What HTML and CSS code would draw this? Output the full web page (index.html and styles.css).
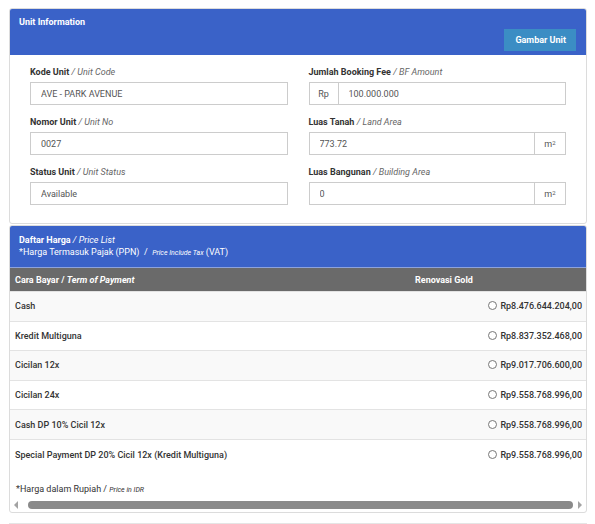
FILE: index.html
```html
<!DOCTYPE html>
<html lang="id">
<head>
    <meta charset="UTF-8">
    <title>Unit Information</title>
    <link rel="stylesheet" href="styles.css">
</head>

<body>
<div class="page">
    <div class="panel">
        <div class="panel-head head-unit">
            <h3 class="title">Unit Information</h3>
            <button class="btn-info">Gambar Unit</button>
        </div>
        <div class="panel-body">
            <div class="grid">
                <div class="field">
                    <label class="lbl">Kode Unit <em>/ Unit Code</em></label>
                    <input class="ctl" value="AVE - PARK AVENUE" readonly>
                </div>
                <div class="field">
                    <label class="lbl">Jumlah Booking Fee <em>/ BF Amount</em></label>
                    <div class="group">
                        <span class="addon addon-left">Rp</span>
                        <input class="ctl" value="100.000.000" readonly>
                    </div>
                </div>
                <div class="field">
                    <label class="lbl">Nomor Unit <em>/ Unit No</em></label>
                    <input class="ctl" value="0027" readonly>
                </div>
                <div class="field">
                    <label class="lbl">Luas Tanah <em>/ Land Area</em></label>
                    <div class="group">
                        <input class="ctl" value="773.72" readonly>
                        <span class="addon addon-right">m<sup>2</sup></span>
                    </div>
                </div>
                <div class="field">
                    <label class="lbl">Status Unit <em>/ Unit Status</em></label>
                    <input class="ctl" value="Available" readonly>
                </div>
                <div class="field">
                    <label class="lbl">Luas Bangunan <em>/ Building Area</em></label>
                    <div class="group">
                        <input class="ctl" value="0" readonly>
                        <span class="addon addon-right">m<sup>2</sup></span>
                    </div>
                </div>
            </div>
        </div>
    </div>

    <div class="panel">
        <div class="panel-head head-price">
            <p class="line"><b>Daftar Harga</b> <em>/ Price List</em></p>
            <p class="line">*Harga Termasuk Pajak (PPN) &nbsp;/ &nbsp;<em class="small">Price Include Tax</em> (VAT)</p>
        </div>
        <div class="scroller">
            <table class="prices">
                <thead>
                <tr>
                    <th class="col-pay">Cara Bayar / <em>Term of Payment</em></th>
                    <th>Renovasi Gold</th>
                </tr>
                </thead>
                <tbody>
                <tr>
                    <td>Cash</td>
                    <td class="price"><input type="radio" name="harga" class="rad">Rp8.476.644.204,00</td>
                </tr>
                <tr>
                    <td>Kredit Multiguna</td>
                    <td class="price"><input type="radio" name="harga" class="rad">Rp8.837.352.468,00</td>
                </tr>
                <tr>
                    <td>Cicilan 12x</td>
                    <td class="price"><input type="radio" name="harga" class="rad">Rp9.017.706.600,00</td>
                </tr>
                <tr>
                    <td>Cicilan 24x</td>
                    <td class="price"><input type="radio" name="harga" class="rad">Rp9.558.768.996,00</td>
                </tr>
                <tr>
                    <td>Cash DP 10% Cicil 12x</td>
                    <td class="price"><input type="radio" name="harga" class="rad">Rp9.558.768.996,00</td>
                </tr>
                <tr>
                    <td>Special Payment DP 20% Cicil 12x (Kredit Multiguna)</td>
                    <td class="price"><input type="radio" name="harga" class="rad">Rp9.558.768.996,00</td>
                </tr>
                </tbody>
            </table>
            <p class="note">*Harga dalam Rupiah / <em class="small">Price in IDR</em></p>
        </div>
        <!-- scrollbar horizontal tabel -->
        <div class="hscroll">
            <span class="arrow arrow-left"></span>
            <span class="thumb"></span>
            <span class="arrow arrow-right"></span>
        </div>
    </div>

    <div class="next"></div>
</div>
</body>
</html>
```

FILE: styles.css
```css
* {
    margin: 0;
    padding: 0;
    box-sizing: border-box;
}

body {
    font-family: Roboto, "Liberation Sans", sans-serif;
    font-size: 9px;
    color: #333;
    background-color: #fff;
}

.page {
    padding: 8px 8px 0 9px;
}

.panel {
    border: 1px solid #dcdcdc;
    border-radius: 3px;
    background-color: #fff;
}

.panel + .panel {
    margin-top: 1px;
}

.panel-head {
    background-color: #3a62c8;
    color: #fff;
    border-radius: 2px 2px 0 0;
}

/* header unit: judul + tombol di kanan bawah */
.head-unit {
    display: flex;
    flex-direction: column;
    padding: 7px 10px 4px 9px;
}

.title {
    font-size: 9px;
    font-weight: 700;
    line-height: 13px;
}

.btn-info {
    align-self: flex-end;
    height: 22px;
    padding: 0 10px 0 11px;
    border: none;
    outline: none;
    background-color: #3b8dc4;
    color: #fff;
    font: 700 9px Roboto, "Liberation Sans", sans-serif;
}

.panel-body {
    padding: 11px 20px 18px;
}

.grid {
    display: grid;
    grid-template-columns: 1fr 1fr;
    column-gap: 21px;
    row-gap: 11px;
}

.lbl {
    display: block;
    line-height: 12px;
    margin-bottom: 4px;
    font-weight: 700;
    color: #333;
}

.lbl em {
    font-weight: 400;
    color: #666;
}

.ctl {
    display: block;
    width: 100%;
    height: 23px;
    padding: 0 10px;
    border: 1px solid #ccc;
    outline: none;
    background-color: #fff;
    color: #555;
    font: 400 9px Roboto, "Liberation Sans", sans-serif;
}

.group {
    display: flex;
    height: 23px;
    border: 1px solid #ccc;
}

.group .ctl {
    flex: 1;
    min-width: 0;
    height: 21px;
    border: none;
}

.addon {
    display: flex;
    align-items: center;
    justify-content: center;
    width: 29px;
    color: #555;
}

.addon sup {
    font-size: 6px;
    line-height: 0;
    position: relative;
    top: -1px;
}

.addon-left {
    border-right: 1px solid #ccc;
}

.addon-right {
    width: 31px;
    border-left: 1px solid #ccc;
}

/* daftar harga */
.head-price {
    padding: 8px 9px;
}

.line {
    line-height: 12px;
}

.line em {
    font-weight: 400;
}

.small {
    font-size: 7px;
}

.scroller {
    overflow: hidden;
}

.prices {
    width: 577px;
    border-collapse: collapse;
}

.prices th {
    height: 24px;
    padding: 0 5px;
    background-color: #6a6a6a;
    color: #fff;
    font-weight: 700;
    text-align: left;
    border-top: 1px solid #8da3dc;
}

.col-pay {
    width: 400px;
}

.prices td {
    height: 29.6px;
    padding: 0 5px;
    border-top: 1px solid #e3e3e3;
    font-weight: 500;
    color: #333;
}

.prices tbody tr:nth-child(odd) td {
    background-color: #f9f9f9;
}

.price {
    text-align: right;
    white-space: nowrap;
}

.rad {
    appearance: none;
    width: 9px;
    height: 9px;
    margin-right: 3px;
    border: 1px solid #777;
    border-radius: 50%;
    background-color: #fff;
    vertical-align: -1px;
}

.note {
    padding: 14px 6px 3px;
    line-height: 12px;
}

.hscroll {
    display: flex;
    align-items: center;
    height: 12px;
    padding: 0 4px;
    margin-bottom: 1px;
}

.thumb {
    flex: 1;
    height: 8px;
    margin: 0 5px 0 10px;
    border-radius: 4px;
    background-color: #8a8a8a;
}

.arrow {
    width: 0;
    height: 0;
    border-top: 4px solid transparent;
    border-bottom: 4px solid transparent;
}

.arrow-left {
    border-right: 4px solid #a3a3a3;
}

.arrow-right {
    border-left: 4px solid #a3a3a3;
}

.next {
    margin-top: 10px;
    border-top: 1px solid #e5e5e5;
}
```
